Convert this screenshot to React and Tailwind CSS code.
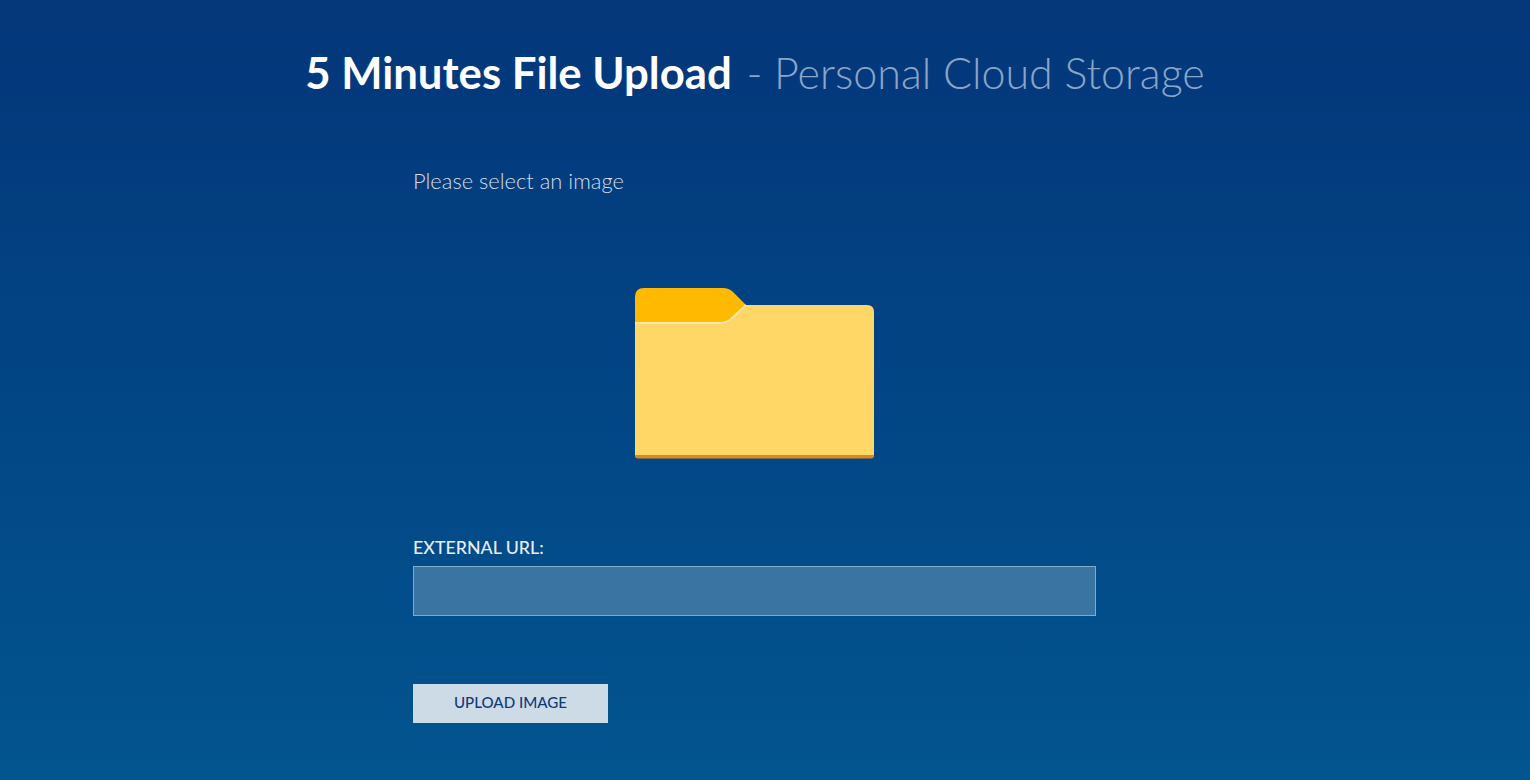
import React from 'react';

// folder drawing, coordinates follow the on-screen pixels of the icon
const FolderIcon = () => (
  <svg width="240" height="172" viewBox="0 0 240 172" fill="none">
    <path d="M0 36V10Q0 1 9 1H88Q94 1 98 5L111 18V40H0Z" fill="#ffb900" />
    <path d="M0 168V36H84Q92 36 96 32L111 18H232Q239 18 239 25V168Q239 171 236 171H3Q0 171 0 168Z" fill="#ffd767" />
    <path d="M0 36H84Q92 36 96 32L111 18" stroke="#ffe8a8" strokeWidth="1.8" />
    <path d="M0 168H239V168.5Q239 171.5 236 171.5H3Q0 171.5 0 168.5Z" fill="#d98a1e" />
  </svg>
);

const App = () => {
  return (
    <div className="h-[780px] overflow-hidden bg-gradient-to-b from-[#04367a] to-[#02558f] font-['Lato',sans-serif]">
      <h1 className="w-[1510px] pt-[43px] text-center text-[43.7px] leading-[58px] font-bold text-white whitespace-nowrap">
        5 Minutes File Upload
        <span className="ml-[3px] text-[43px] font-light text-[#8aa5c6]"> - Personal Cloud Storage</span>
      </h1>

      <div className="mt-[65px] ml-[413px] w-[683px]">
        <p className="text-[21.9px] leading-[28px] font-light text-[#d3dde9]">Please select an image</p>

        <div className="mt-[92px] flex justify-center pl-[1px]">
          <FolderIcon />
        </div>

        <label className="mt-[76px] block text-[17.8px] leading-[24px] font-medium text-[#e8eef5]">EXTERNAL URL:</label>
        <input
          type="text"
          className="mt-[7px] block h-[50px] w-full border border-[#86a9c8] bg-[#3a74a3]"
        />

        <button className="mt-[68px] flex h-[39px] w-[195px] items-center justify-center bg-[#cddbe7] pb-[2px] text-[15.1px] font-medium text-[#12397c]">
          UPLOAD IMAGE
        </button>
      </div>
    </div>
  );
};

export default App;
